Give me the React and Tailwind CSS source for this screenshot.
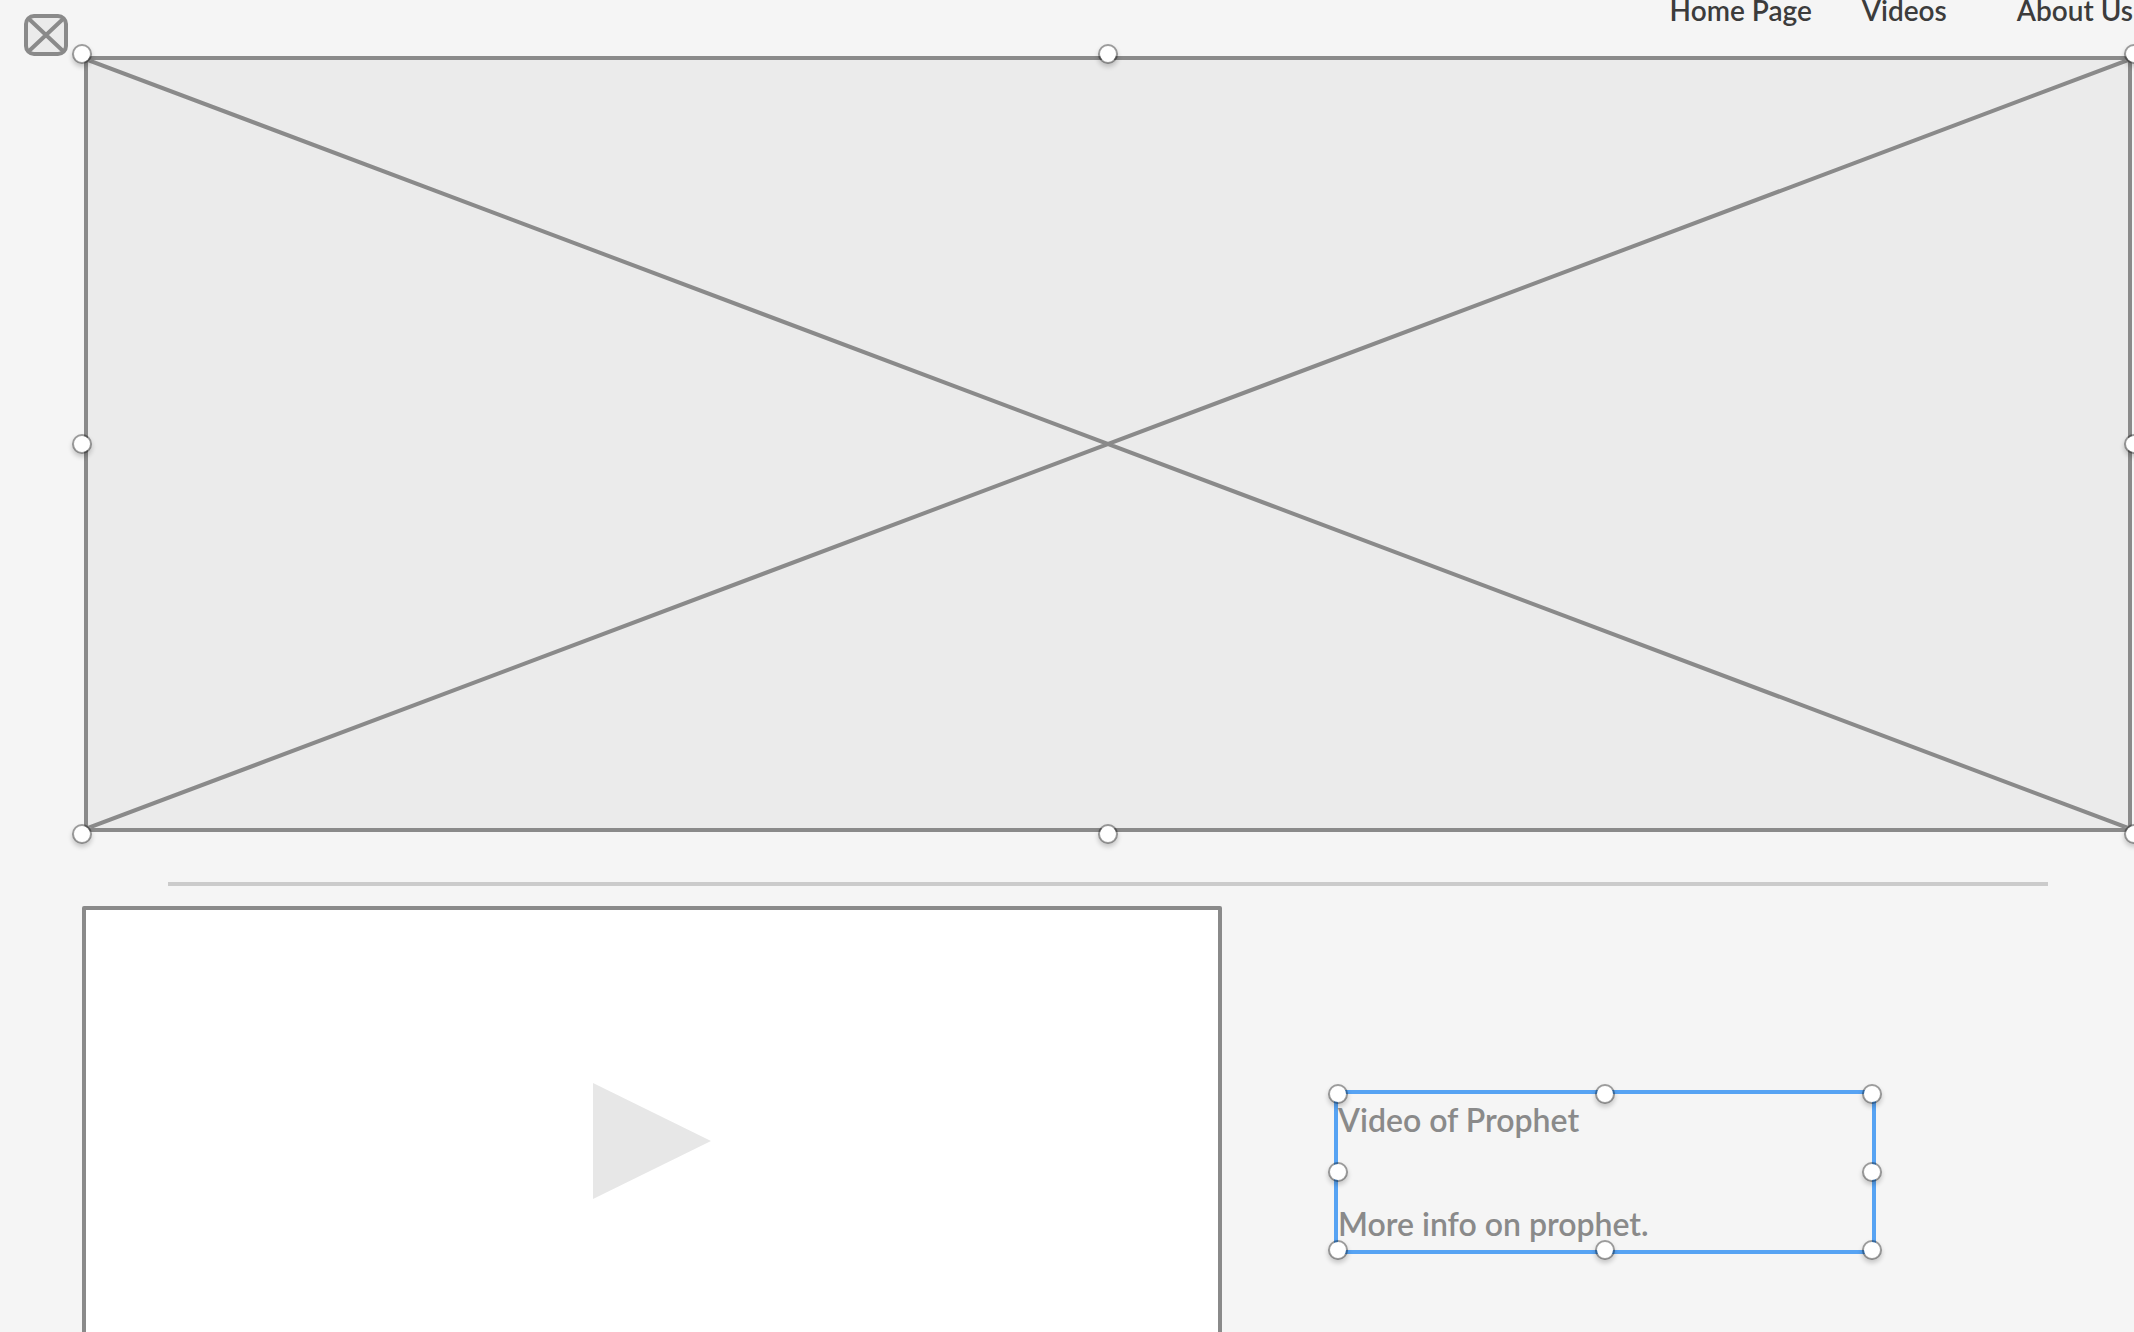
const HANDLE_SPOTS = [
  ["top left", "left-0 top-0"],
  ["top", "left-1/2 top-0"],
  ["top right", "left-full top-0"],
  ["left", "left-0 top-1/2"],
  ["right", "left-full top-1/2"],
  ["bottom left", "left-0 top-full"],
  ["bottom", "left-1/2 top-full"],
  ["bottom right", "left-full top-full"],
];

function Handles({ label, inset }) {
  return (
    <div className={`absolute ${inset}`}>
      {HANDLE_SPOTS.map(([name, spot]) => (
        <button
          key={name}
          type="button"
          aria-label={`Resize ${label}, ${name}`}
          className={`absolute size-5 -translate-x-1/2 -translate-y-1/2 rounded-full border-2 border-black/35 bg-white bg-clip-padding shadow-[0_3px_5px_rgba(0,0,0,0.2)] ${spot}`}
        />
      ))}
    </div>
  );
}

function LogoPlaceholder() {
  return (
    <svg className="h-[42px] w-11" viewBox="0 0 44 42" role="img" aria-label="Logo placeholder">
      <rect x="2" y="2" width="40" height="38" rx="8" fill="#ebebeb" stroke="#8a8a8a" strokeWidth="4" />
      <path d="M5 5 39 37M39 5 5 37" stroke="#8a8a8a" strokeWidth="4" />
    </svg>
  );
}

export default function App() {
  return (
    <div className="h-screen overflow-hidden bg-[#f5f5f5] font-['Lato',sans-serif] font-semibold">
      <header className="flex h-14 items-start justify-between pl-6">
        <div className="pt-3.5">
          <LogoPlaceholder />
        </div>
        <nav className="flex gap-[50px] pr-px text-[28px] leading-5 whitespace-nowrap text-[#3c3c3c]">
          <a href="#home">Home Page</a>
          <a href="#videos">Videos</a>
          <a href="#about" className="ml-5">About Us</a>
        </nav>
      </header>

      <main>
        <section className="relative mr-0.5 ml-[84px]">
          <div className="aspect-[2048/776] overflow-hidden rounded-lg border-4 border-[#8a8a8a] bg-[#ebebeb]">
            <svg className="size-full" viewBox="0 0 2040 768" preserveAspectRatio="none" aria-hidden="true">
              <path d="M0 0 2040 768M2040 0 0 768" stroke="#8a8a8a" strokeWidth="4" />
            </svg>
          </div>
          <Handles label="banner" inset="-inset-0.5" />
        </section>

        <hr className="mt-[50px] mr-[86px] mb-5 ml-[168px] border-t-4 border-[#cbcbcb]" />

        <section className="ml-[82px] grid grid-cols-[1140fr_112fr_542fr_258fr] items-start">
          <button
            type="button"
            aria-label="Play video"
            className="flex aspect-[1140/470] items-center justify-center rounded-xs border-4 border-[#8a8a8a] bg-white"
          >
            <svg className="h-[116px] w-[118px]" viewBox="0 0 118 116" aria-hidden="true">
              <path d="M0 0 118 58 0 116Z" fill="#e7e7e7" />
            </svg>
          </button>
          <div className="relative col-start-3 mt-[184px] border-4 border-[#57a3f3] text-[32px] leading-[52px] text-[#8a8a8a]">
            <div className="flex flex-col gap-[52px]">
              <p>Video of Prophet</p>
              <p>More info on prophet.</p>
            </div>
            <Handles label="text box" inset="inset-0" />
          </div>
        </section>
      </main>
    </div>
  );
}
